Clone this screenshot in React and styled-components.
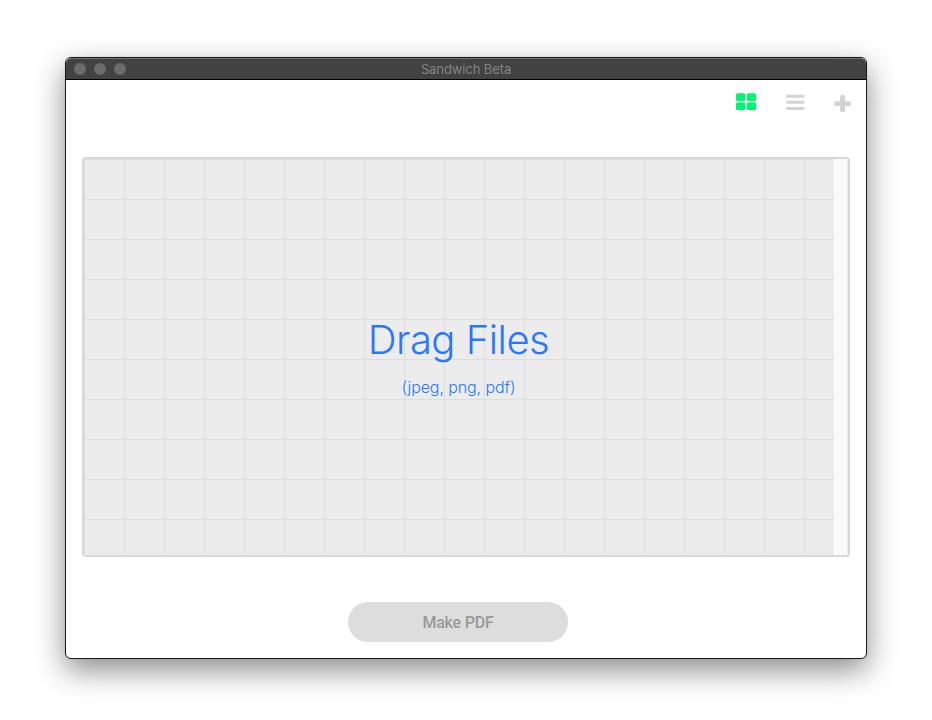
import React from 'react';
import styled, { createGlobalStyle } from 'styled-components';

const GlobalStyle = createGlobalStyle`
  * { box-sizing: border-box; }
  body { margin: 0; background: #fff; }
`;

const Desktop = styled.div`
  width: 932px;
  height: 720px;
  padding: 57px 65px 61px;
  overflow: hidden;
  background: #fff;
`;

const Window = styled.main`
  display: flex;
  flex-direction: column;
  width: 802px;
  height: 602px;
  border: 1px solid #1b1c1d;
  border-radius: 6px;
  background: #fff;
  overflow: hidden;
  box-shadow: 0 11px 30px rgba(0, 0, 0, 0.46), 0 0 2px rgba(0, 0, 0, 0.12);
`;

const TitleBar = styled.header`
  display: grid;
  grid-template-columns: 1fr auto 1fr;
  align-items: center;
  flex: none;
  height: 22px;
  border-top: 1px solid #6f6f6f;
  border-bottom: 1px solid #000;
  border-radius: 5px 5px 0 0;
  background: #424242;
`;

const Controls = styled.div`
  display: flex;
  gap: 8px;
  padding-left: 8px;
`;

const Control = styled.span`
  width: 12px;
  height: 12px;
  border-radius: 50%;
  background: #6b6b6b;
`;

const Title = styled.h1`
  margin: 0;
  font: 400 13px/16px Inter, sans-serif;
  letter-spacing: -0.1px;
  color: #848484;
`;

const Toolbar = styled.nav`
  display: flex;
  justify-content: flex-end;
  align-items: flex-start;
  flex: none;
  height: 77px;
  padding: 13px 14px 0 0;
`;

const ToolButton = styled.button`
  display: flex;
  margin: 0 0 0 ${({ $gap = 0 }) => $gap}px;
  padding: 0;
  border: 0;
  background: none;
  color: ${({ $active }) => ($active ? '#00f573' : '#d3d3d3')};
`;

const DropZone = styled.section`
  display: flex;
  flex: none;
  height: 400px;
  margin: 0 16px;
  border: 2px solid #d8d8d8;
  border-radius: 4px;
  overflow: hidden;
`;

const Grid = styled.div`
  display: flex;
  flex-direction: column;
  align-items: center;
  width: 749px;
  padding-top: 157px;
  background-color: #ececec;
  background-image: linear-gradient(#dddddd 1px, transparent 1px),
    linear-gradient(90deg, #dddddd 1px, transparent 1px);
  background-size: 40px 40px;
  color: #2878ff;
`;

const Heading = styled.h2`
  margin: 0;
  font: 300 40px/48px Inter, sans-serif;
  letter-spacing: -0.5px;
`;

const Formats = styled.p`
  margin: 13px 0 0;
  font: 300 16px/20px Inter, sans-serif;
  letter-spacing: -0.1px;
`;

const ScrollTrack = styled.div`
  flex: 1;
  border-left: 1px solid #ededed;
  border-right: 1px solid #ededed;
  background: #fafafa;
`;

const Footer = styled.footer`
  display: flex;
  justify-content: center;
  padding: 45px 16px 0 0;
`;

const MakeButton = styled.button`
  width: 220px;
  height: 40px;
  padding: 2px 0 0;
  border: 0;
  border-radius: 20px;
  background: #ddd;
  color: #999;
  font: 500 16px/38px Roboto, sans-serif;
  letter-spacing: -0.2px;
`;

const GridIcon = () => (
  <svg width="22" height="18" fill="currentColor">
    <rect x="1" y="0.2" width="9.3" height="7.8" rx="1.6" />
    <rect x="11.8" y="0.2" width="9.3" height="7.8" rx="1.6" />
    <rect x="1" y="9.3" width="9.3" height="7.8" rx="1.6" />
    <rect x="11.8" y="9.3" width="9.3" height="7.8" rx="1.6" />
  </svg>
);

const ListIcon = () => (
  <svg width="20" height="18" fill="currentColor">
    <rect x="1" y="1.7" width="18.5" height="3" rx="1" />
    <rect x="1" y="7.7" width="18.5" height="3" rx="1" />
    <rect x="1" y="13.9" width="18.5" height="3" rx="1" />
  </svg>
);

const PlusIcon = () => (
  <svg width="18" height="20" fill="currentColor">
    <rect x="6.1" y="2" width="5" height="17" rx="1.5" />
    <rect x="0.1" y="8.2" width="17" height="4.7" rx="1.5" />
  </svg>
);

export default function App() {
  return (
    <Desktop>
      <GlobalStyle />
      <Window>
        <TitleBar>
          <Controls><Control /><Control /><Control /></Controls>
          <Title>Sandwich Beta</Title>
        </TitleBar>
        <Toolbar>
          <ToolButton $active aria-label="Grid view"><GridIcon /></ToolButton>
          <ToolButton $gap={28} aria-label="List view"><ListIcon /></ToolButton>
          <ToolButton $gap={29} aria-label="Add files"><PlusIcon /></ToolButton>
        </Toolbar>
        <DropZone>
          <Grid>
            <Heading>Drag Files</Heading>
            <Formats>(jpeg, png, pdf)</Formats>
          </Grid>
          <ScrollTrack />
        </DropZone>
        <Footer><MakeButton>Make PDF</MakeButton></Footer>
      </Window>
    </Desktop>
  );
}
